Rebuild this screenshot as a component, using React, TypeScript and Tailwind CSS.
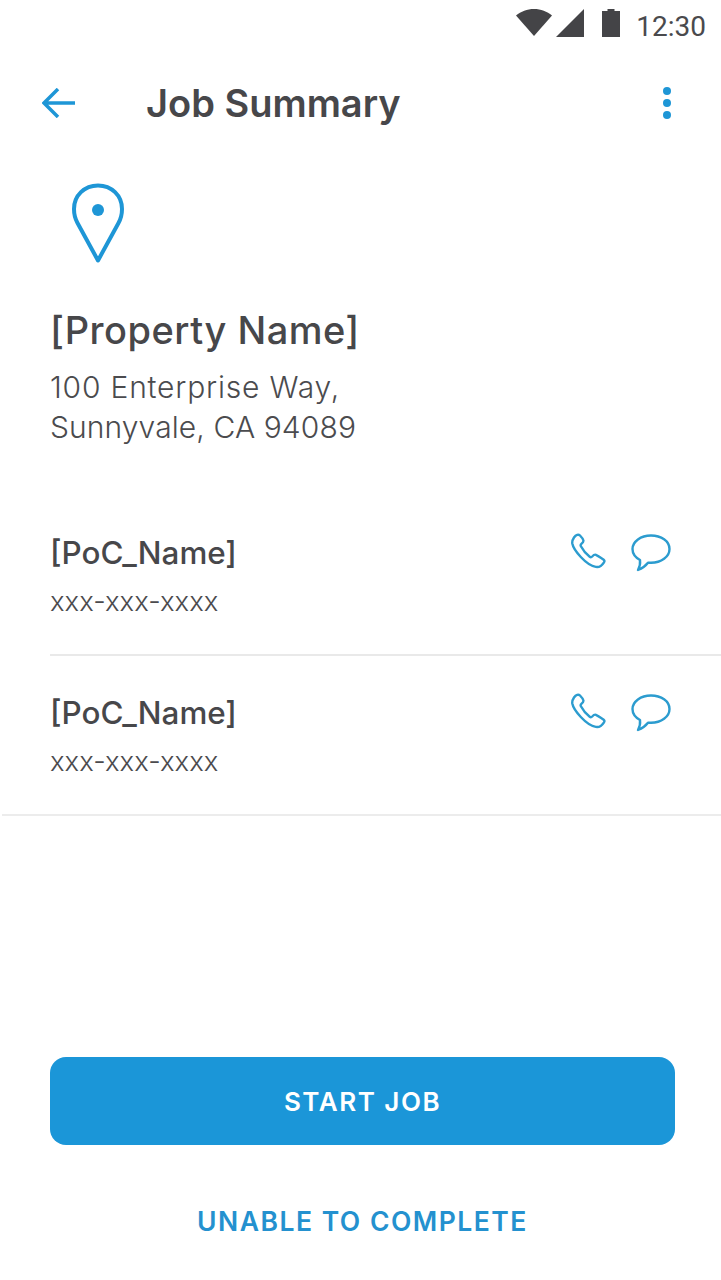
const font = { fontFamily: "Inter, 'Open Sans', sans-serif" }

function Contact() {
  return (
    <div className="h-[158px] flex justify-between pr-[50px]">
      <div>
        <div className="pt-[37px] text-[31.400px] leading-[40px] font-medium text-[#47474a]">[PoC_Name]</div>
        <div className="mt-[9px] text-[27.500px] leading-[38px] font-light text-[#4b4b4e]">xxx-xxx-xxxx</div>
      </div>
      <div className="flex gap-[23px] pt-[37px] items-start">
        {/* phone */}
        <svg width="37" height="37" viewBox="0 0 37 37" fill="none" stroke="#2c9ccf" strokeWidth="2.400" strokeLinejoin="round">
          <path d="M3 4.500C5 1.500 7.500 1 9 2.500c1.600 1.600 3 3.600 3.400 5 .3 1.200-.6 2.200-2 3.400-.8.7-1 1.400-.5 2.400 2.200 4.200 5 7.600 8.800 10.400.9.7 1.700.6 2.500-.2 1.300-1.400 2.500-2.200 3.700-1.700 1.900.8 5 2.900 7.800 4.900.9.7 1 1.700.3 2.600-1.800 2.800-5.200 5.200-8.200 4.600C15 32.200 2.500 17 1.300 10.500 1 8.300 1.800 6.300 3 4.500z" />
        </svg>
        {/* speech bubble */}
        <svg width="40" height="38" viewBox="0 0 40 38" fill="none" stroke="#2c9ccf" strokeWidth="2.400" strokeLinejoin="round" className="mt-[1px]">
          <path d="M20 1.500C9.800 1.500 1.500 7.500 1.500 15c0 4.500 3 8.500 7.500 11 .4 3.500-.3 7-2 10 3.800-1.500 7.500-4 10-7.300 1 .1 2 .1 3 .1 10.200 0 18.500-6 18.500-13.800S30.200 1.500 20 1.500z" />
        </svg>
      </div>
    </div>
  )
}

export default function App() {
  return (
    <div style={font} className="relative w-[721px] h-[1280px] bg-white flex flex-col overflow-hidden">
      {/* status bar */}
      <div className="h-[50px] flex items-start justify-end pt-[9px] pr-[15px] text-[#4a4a4d]">
        <svg width="36" height="27" viewBox="0 0 36 27" fill="#444447" className="mr-[4px]">
          <path d="M0 6.500C5 2.500 11 0 18 0s13 2.500 18 6.500L18 27z" />
        </svg>
        <svg width="28" height="28" viewBox="0 0 28 28" fill="#444447" className="mr-[18px]">
          <path d="M28 0v28H0z" />
        </svg>
        <svg width="18" height="28" viewBox="0 0 18 28" fill="#444447" className="mr-[16px]">
          <path d="M5.500 0h7v2H18v26H0V2h5.500z" />
        </svg>
        <span className="text-[28px] leading-none mt-[4px]" style={{ fontFamily: "Roboto, sans-serif" }}>12:30</span>
      </div>

      {/* toolbar */}
      <div className="h-[106px] flex items-center pl-[42px] pr-[50px]">
        <svg width="33" height="30" viewBox="0 0 33 30" fill="none" stroke="#1e96d6" strokeWidth="3.500" className="shrink-0">
          <path d="M33 15H2M16 1 2 15l14 14" />
        </svg>
        <div className="ml-[71px] -mt-[1px] flex-1 text-[38px] leading-[46px] font-semibold text-[#47474a]">Job Summary</div>
        <div className="flex flex-col gap-[4px]">
          <span className="w-[8px] h-[8px] rounded-full bg-[#1e96d6]" />
          <span className="w-[8px] h-[8px] rounded-full bg-[#1e96d6]" />
          <span className="w-[8px] h-[8px] rounded-full bg-[#1e96d6]" />
        </div>
      </div>

      {/* property */}
      <div className="pl-[50px] pt-[27px]">
        <svg width="54" height="80" viewBox="0 0 54 80" fill="none" className="ml-[21px]">
          <path d="M27 77.500 6.500 40C4 35.500 3 30.500 3 26 3 12.500 13.500 2.500 27 2.500S51 12.500 51 26c0 4.500-1 9.500-3.500 14z" stroke="#1e96d6" strokeWidth="4" strokeLinejoin="round" />
          <circle cx="27" cy="27" r="6" fill="#1e96d6" />
        </svg>
        <div className="mt-[44px] text-[38px] leading-[46px] font-medium tracking-[0.500px] text-[#47474a]">[Property Name]</div>
        <div className="mt-[14px] text-[30px] leading-[40px] font-light text-[#4b4b4e]">
          <span className="tracking-[0.800px]">100 Enterprise Way,</span>
          <br />
          <span className="tracking-[0.100px]">Sunnyvale, CA 94089</span>
        </div>
      </div>

      {/* contacts */}
      <div className="mt-[49px] ml-[50px] border-b-2 border-[#e9e9e9]">
        <Contact />
      </div>
      <div className="pl-[48px] ml-[2px] border-b-2 border-[#ececec]">
        <Contact />
      </div>

      {/* actions */}
      <div className="mt-auto pl-[50px] pr-[46px] pb-[35px] flex flex-col items-stretch">
        <button className="h-[88px] rounded-[16px] bg-[#1b96d8] text-white text-[26px] font-semibold tracking-[1.500px]">START JOB</button>
        <button className="mt-[52px] h-[48px] text-[26.500px] pt-[2px] font-semibold tracking-[1.500px] text-[#2491cf]">UNABLE TO COMPLETE</button>
      </div>
    </div>
  )
}
